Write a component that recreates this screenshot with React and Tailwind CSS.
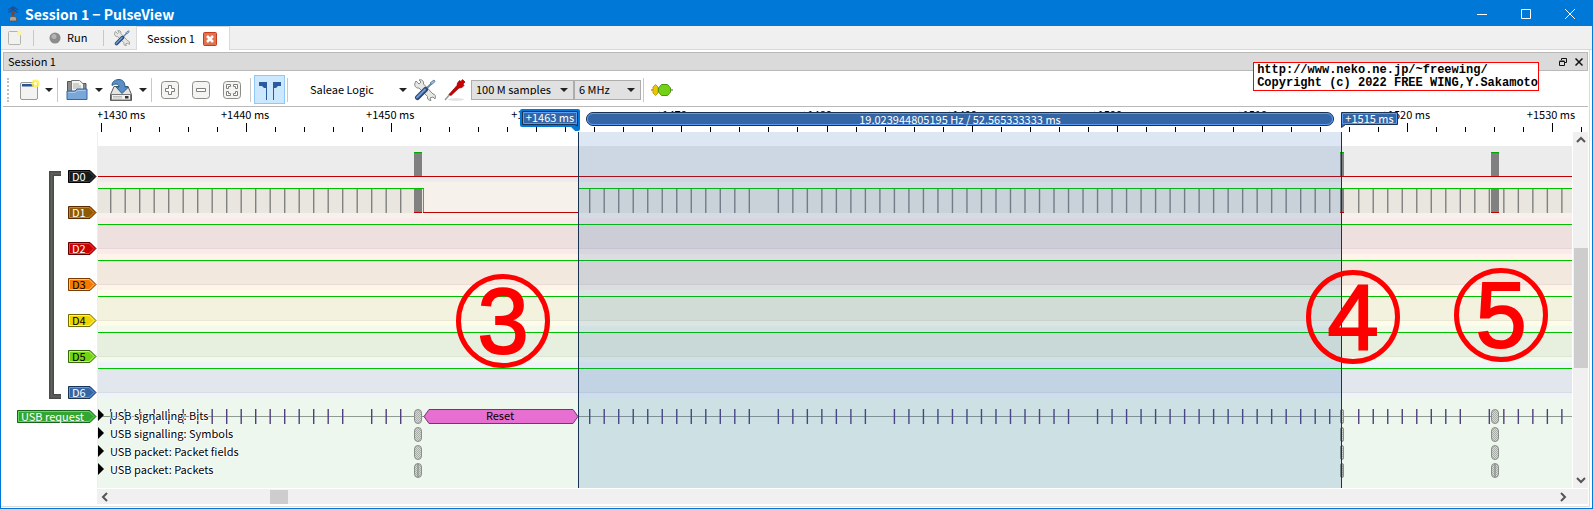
import { useState } from 'react';
import clsx from 'clsx';

// Pixel geometry of the trace view, measured from the left edge of the lanes
const LANE_HEIGHT = 36;
const CURSOR_A = 480;
const BURSTS = [
  { x: 316, w: 8 },
  { x: 1242, w: 4 },
  { x: 1393, w: 8 },
];

const CHANNELS = [
  { name: 'D0', fill: '#16191a', edge: '#000000', glow: '#3a4043', text: 'text-white', lane: 'bg-[#ececec]', level: 'low' },
  { name: 'D1', fill: '#8f5902', edge: '#5c2a00', glow: '#f57900', text: 'text-white', lane: 'bg-[#f6f1eb]', level: 'usb' },
  { name: 'D2', fill: '#cc0000', edge: '#5f0000', glow: '#ff4040', text: 'text-white', lane: 'bg-[#fbeaea]', level: 'high' },
  { name: 'D3', fill: '#f57900', edge: '#7a3c00', glow: '#ffc080', text: 'text-black', lane: 'bg-[#fff3ea]', level: 'high' },
  { name: 'D4', fill: '#edd400', edge: '#766a00', glow: '#fff27a', text: 'text-black', lane: 'bg-[#fffdea]', level: 'high' },
  { name: 'D5', fill: '#73d216', edge: '#39690b', glow: '#b5f57a', text: 'text-black', lane: 'bg-[#f4faeb]', level: 'high' },
  { name: 'D6', fill: '#3465a4', edge: '#1a3252', glow: '#5c9cf5', text: 'text-white', lane: 'bg-[#eef2f9]', level: 'high' },
];

const DECODER_ROWS = [
  'USB signalling: Bits',
  'USB signalling: Symbols',
  'USB packet: Packet fields',
  'USB packet: Packets',
];

const NOTES = [
  { digit: '3', place: 'left-[358px] top-[142px]' },
  { digit: '4', place: 'left-[1208px] top-[138px]' },
  { digit: '5', place: 'left-[1356px] top-[136px]' },
];

// Keep-alive pulses, one every millisecond
const before = Array.from({ length: 21 }, (_, k) => 12 + k * 14.5);
const after = Array.from({ length: 68 }, (_, k) => 491 + k * 14.51);
const d1Pulses = [...before, ...after.filter((_, k) => k !== 12 && k !== 52)];
const bitPulses = [
  ...before.filter((_, k) => k !== 17),
  ...after.filter((_, k) => ![12, 20, 34, 52, 61].includes(k)),
];

function DownArrow({ className }) {
  return (
    <svg className={clsx('h-1 w-2 shrink-0', className)} viewBox="0 0 8 4">
      <path d="M0 0h8L4 4z" fill="#222" />
    </svg>
  );
}

function Separator({ className }) {
  return <div className={clsx('w-px shrink-0 bg-[#c8c8c8]', className)} />;
}

function NewIcon({ className }) {
  return (
    <svg className={className} viewBox="0 0 22 22">
      <rect x="1.5" y="3.500" width="17" height="17" rx="1.500" fill="#f3f3f1" stroke="#9a9a96" />
      <path d="M3 5h12v2.500H3z" fill="#2c5494" />
      <circle cx="16.500" cy="4.500" r="4" fill="#fff04a" opacity=".85" />
      <circle cx="16.500" cy="4.500" r="1.500" fill="#fff" />
    </svg>
  );
}

function PageIcon({ className }) {
  return (
    <svg className={className} viewBox="0 0 16 16">
      <rect x="1.500" y="1.500" width="12" height="13" rx="1" fill="#f1f1ef" stroke="#b2b2ae" />
      <circle cx="12.500" cy="3" r="2.500" fill="#fbf3a8" />
    </svg>
  );
}

function OpenIcon() {
  return (
    <svg className="h-[22px] w-[22px]" viewBox="0 0 22 22">
      <path d="M1.500 19V2.500h6l1.500 2h11V19z" fill="#8a8d88" stroke="#555753" />
      <path d="M5.500 1.500h8l4 3.500v8h-12z" fill="#f4f4f2" stroke="#777" />
      <path d="M7 5h6M7 7h8M7 9h8" stroke="#aaa" />
      <path d="M1 20.500V12h8l2-2H21v10.500z" fill="#7ba6d8" stroke="#3465a4" />
      <path d="M2.500 13.500h7l2-2H19.500" fill="none" stroke="#a9c8ec" />
    </svg>
  );
}

function SaveIcon() {
  return (
    <svg className="h-6 w-6" viewBox="0 0 24 24">
      <path d="M5 8.500h14l3.500 8v6h-21v-6z" fill="#e4e5e2" stroke="#555753" />
      <rect x="2.500" y="16.500" width="19" height="5.500" fill="#f2f2f0" stroke="#777" />
      <path d="M4 18.500h9M4 20h9" stroke="#bbb" />
      <rect x="16" y="18" width="3.500" height="2.500" fill="#333" />
      <path d="M3 7.500C3 3 7 1.500 10 1.500c4 0 6 3 6 7.500h3.500L13 15.500 7 9h3c0-3-3-4-7-1.500z" fill="#5a8fc4" stroke="#2a5c8f" />
    </svg>
  );
}

function ZoomIcon({ kind }) {
  return (
    <svg className="h-5 w-5" viewBox="0 0 20 20">
      <rect x="1.500" y="1.500" width="17" height="17" rx="3" fill="#f4f4f2" stroke="#8c8c88" />
      {kind === 'in' && (
        <path d="M8.500 5.500h3v3h3v3h-3v3h-3v-3h-3v-3h3z" fill="#fff" stroke="#7e7e7a" />
      )}
      {kind === 'out' && <path d="M5.500 8.500h9v3h-9z" fill="#fff" stroke="#7e7e7a" />}
      {kind === 'fit' && (
        <path
          d="M4.500 8.500v-4h4v2h-2v2zM11.500 4.500h4v4h-2v-2h-2zM4.500 11.500h2v2h2v2h-4zM13.500 11.500h2v4h-4v-2h2z"
          fill="#fff"
          stroke="#7e7e7a"
        />
      )}
    </svg>
  );
}

function CursorsIcon() {
  return (
    <svg className="h-5 w-6" viewBox="0 0 24 20">
      <path d="M1 2h8v18H8V8H6L4 6H1zM23 2h-8v18h1V8h2l2-2h3z" fill="#2a5ba0" />
    </svg>
  );
}

function ToolsIcon({ className }) {
  return (
    <svg className={className} viewBox="0 0 22 22">
      <path d="M2 2l3 3 2-2-2-2c3-1 5 1 4.500 4L19 15c2 0 3 2 2 5l-2-2-3 1 1 2.500c-3 0-4-2-3.500-4L5 9C2 9.500 0 7 1 4z" fill="#e6e7e4" stroke="#888a85" />
      <path d="M20.500 1.500L12 10" stroke="#6f87a8" strokeWidth="2" />
      <path d="M20 1l1 1.500-3 3-2-1.500z" fill="#a6c0e0" stroke="#48668e" strokeWidth=".7" />
      <path d="M11.500 10.500l-8 8" stroke="#27477c" strokeWidth="5" strokeLinecap="round" />
      <path d="M11 10.500l-8 8" stroke="#7299d0" strokeWidth="2" strokeLinecap="round" />
    </svg>
  );
}

function ProbeIcon() {
  return (
    <svg className="h-[22px] w-[22px]" viewBox="0 0 22 22">
      <ellipse cx="12" cy="20.500" rx="8" ry="1.500" fill="#e4e4e4" />
      <path d="M1 21l5.500-6.500" stroke="#999" strokeWidth="1.500" />
      <path d="M5 15.500l8-9 .500-2.500 2-2.500 1.500 1L18.500.500l2.500 2.500-2 2 1 1.500-2 2-3 .500-8 7.500z" fill="#cc0000" stroke="#8a0000" strokeWidth=".7" />
    </svg>
  );
}

function DecoderIcon() {
  return (
    <svg className="h-3.5 w-6" viewBox="0 0 24 14">
      <path d="M1 7h22" stroke="#555753" />
      <path d="M5.500 1.500L8 4v6l-2.500 2.500L3 10V4z" fill="#edc400" stroke="#c4a000" />
      <path d="M11.500 1.500h6L20.500 5v4l-3 3.500h-6L8.500 9V5z" fill="#73d216" stroke="#4e9a06" />
    </svg>
  );
}

function AppIcon() {
  return (
    <svg className="h-4 w-4" viewBox="0 0 16 16">
      <path d="M3 4l3-2 2-1 2 1 3 2M3.500 6.500L8 3l4.500 3.500M6 1l2 3 2-3" fill="none" stroke="#1b4f8f" strokeWidth="1.200" />
      <path d="M6 5h4v3H9v4H7V8H6z" fill="#6b4a48" />
      <path d="M4.500 12l1.500-1.500h4l1.500 1.500v3h-7z" fill="#a9a49c" stroke="#5d4a42" strokeWidth=".7" />
    </svg>
  );
}

function TitleBar() {
  return (
    <header className="flex h-[25px] items-center bg-[#0078d7] pl-1 text-white">
      <AppIcon />
      <h1 className="ml-1 flex-1 text-[14px] font-bold">Session 1 − PulseView</h1>
      <button aria-label="Minimize" className="flex w-11 justify-center">
        <svg className="h-3 w-3" viewBox="0 0 12 12"><path d="M1 6.500h10" stroke="white" /></svg>
      </button>
      <button aria-label="Maximize" className="flex w-11 justify-center">
        <svg className="h-3 w-3" viewBox="0 0 12 12"><path d="M1.500 1.500h9v9h-9z" fill="none" stroke="white" /></svg>
      </button>
      <button aria-label="Close" className="flex w-11 justify-center">
        <svg className="h-3 w-3" viewBox="0 0 12 12"><path d="M1 1l10 10M11 1L1 11" stroke="white" /></svg>
      </button>
    </header>
  );
}

function TabBar() {
  return (
    <nav className="flex h-6 items-stretch bg-[#f0f0f0]">
      <div className="flex w-[135px] items-center border-b border-[#d9d9d9] pl-1.5">
        <button aria-label="New session"><PageIcon className="h-4 w-4" /></button>
        <Separator className="ml-2.5 h-4" />
        <button className="ml-[15px] flex items-center gap-1.5">
          <svg className="h-3 w-3" viewBox="0 0 12 12">
            <circle cx="6" cy="6" r="5.500" fill="#8c8c8c" />
            <circle cx="5" cy="4.500" r="2.500" fill="#b4b4b4" />
          </svg>
          Run
        </button>
        <Separator className="ml-4 h-4" />
        <button aria-label="Settings" className="ml-2.5"><ToolsIcon className="h-4 w-4" /></button>
      </div>
      <div className="flex w-[94px] items-center justify-between border-x border-t border-[#d9d9d9] bg-white pr-3 pl-2.5">
        <span>Session 1</span>
        <button aria-label="Close session">
          <svg className="h-3.5 w-3.5" viewBox="0 0 14 14">
            <rect x=".5" y=".5" width="13" height="13" rx="1" fill="#e0724e" stroke="#c8391e" />
            <path d="M4 4l6 6M10 4l-6 6" stroke="white" strokeWidth="2.500" />
          </svg>
        </button>
      </div>
      <div className="flex-1 border-b border-[#d9d9d9]" />
    </nav>
  );
}

function Combo({ label, value, options, onChange, className }) {
  return (
    <div className={clsx('relative', className)}>
      <select
        aria-label={label}
        value={value}
        onChange={(e) => onChange(e.target.value)}
        className="block h-5 w-full appearance-none border border-[#adadad] bg-[#e1e1e1] pl-1 leading-none"
      >
        {options.map((o) => (
          <option key={o}>{o}</option>
        ))}
      </select>
      <DownArrow className="pointer-events-none absolute top-2 right-1.5" />
    </div>
  );
}

function Toolbar() {
  const [samples, setSamples] = useState('100 M samples');
  const [rate, setRate] = useState('6 MHz');
  return (
    <div className="flex h-9 items-center border-b border-[#b9b9b9] bg-white pt-0.5 pl-1">
      <div className="h-6 border-l-2 border-dotted border-[#c0c0c0]" />
      <button aria-label="New view" className="ml-2.5 flex items-center">
        <NewIcon className="h-[22px] w-[22px]" />
        <DownArrow className="ml-1" />
      </button>
      <Separator className="ml-1 h-6" />
      <button aria-label="Open" className="ml-2 flex items-center">
        <OpenIcon />
        <DownArrow className="ml-[7px]" />
      </button>
      <button aria-label="Save" className="ml-1.5 flex items-center">
        <SaveIcon />
        <DownArrow className="ml-1.5" />
      </button>
      <Separator className="ml-1 h-6" />
      <div className="ml-2 flex gap-[11px]">
        <button aria-label="Zoom in"><ZoomIcon kind="in" /></button>
        <button aria-label="Zoom out"><ZoomIcon kind="out" /></button>
        <button aria-label="Zoom to fit"><ZoomIcon kind="fit" /></button>
      </div>
      <Separator className="ml-2 h-6" />
      <button
        aria-label="Show cursors"
        className="ml-[3px] flex h-[29px] w-[31px] items-center justify-center border border-[#90c8f6] bg-[#cce8ff]"
      >
        <CursorsIcon />
      </button>
      <Separator className="ml-0.5 h-6" />
      <button className="ml-[22px] flex w-[97px] items-center justify-between">
        Saleae Logic
        <DownArrow />
      </button>
      <button aria-label="Configure device" className="ml-[7px]"><ToolsIcon className="h-[22px] w-[22px]" /></button>
      <button aria-label="Configure channels" className="ml-2"><ProbeIcon /></button>
      <Combo
        label="Sample count"
        value={samples}
        onChange={setSamples}
        options={['10 M samples', '100 M samples']}
        className="ml-[5px] w-[103px]"
      />
      <Combo
        label="Sample rate"
        value={rate}
        onChange={setRate}
        options={['6 MHz', '12 MHz']}
        className="w-[67px]"
      />
      <Separator className="ml-0.5 h-6" />
      <button aria-label="Add decoder" className="ml-1.5"><DecoderIcon /></button>
    </div>
  );
}

function Ruler() {
  const ticks = Array.from({ length: 52 }, (_, k) => k);
  return (
    <div className="relative ml-[95px] h-[25px] bg-white">
      <svg className="h-full w-full" shapeRendering="crispEdges">
        {ticks.map((k) => (
          <rect key={k} x={Math.round(3 + k * 29.02)} y={k % 5 ? 20 : 16} width="1" height={k % 5 ? 5 : 9} />
        ))}
        {ticks.filter((k) => k % 5 === 0).map((k) => (
          <text key={k} x={k ? 2 + k * 29.02 : 23} y="12" textAnchor="middle" fontSize="11">
            +{1430 + k * 2} ms
          </text>
        ))}
      </svg>
      {/* Cursor flags and the interval between them */}
      <div className="absolute top-0.5 left-[422px] flex h-[22px] w-[60px] justify-center text-white">
        <svg className="absolute inset-0 h-full w-full" viewBox="0 0 60 22">
          <path d="M2 2h56v18h-2l-4-4H2z" fill="#3465a4" stroke="#0078d7" strokeWidth="4" strokeLinejoin="round" />
          <path d="M2.500 2.500h55V17l-3-1.500h-52z" fill="#3465a4" stroke="#1a3252" />
          <path d="M3.500 3.500h53v11h-53z" fill="none" stroke="#5c9cf5" />
        </svg>
        <span className="relative leading-[17px]">+1463 ms</span>
      </div>
      <div className="absolute top-[5px] left-[488px] h-[14px] w-[748px] rounded-full border border-[#1a3252] bg-[#3465a4]">
        <div className="h-full rounded-full border border-[#5c9cf5] text-center leading-[10px] text-white">
          19.023944805195 Hz / 52.565333333 ms
        </div>
      </div>
      <div className="absolute top-[5px] left-[1243px] flex h-4 w-[57px] justify-center text-white">
        <svg className="absolute inset-0 h-full w-full" viewBox="0 0 57 16">
          <path d="M.5.500h56v12H4.500l-4 3z" fill="#3465a4" stroke="#1a3252" />
          <path d="M1.500 12V1.500h54v10h-52z" fill="none" stroke="#5c9cf5" />
        </svg>
        <span className="relative leading-[13px]">+1515 ms</span>
      </div>
    </div>
  );
}

function Tag({ children, fill, edge, glow, className, width }) {
  const tip = width - 1;
  return (
    <div className={clsx('relative h-[13px] pl-1 leading-[12px]', className)}>
      <svg className="absolute inset-0 h-full w-full" viewBox={`0 0 ${width} 13`}>
        <path d={`M.5.5H${tip - 6}L${tip} 6.5L${tip - 6} 12.5H.5z`} fill={fill} stroke={edge} />
        <path d={`M1.500 1.500H${tip - 7}L${tip - 2} 6.500L${tip - 7} 11.500H1.500z`} fill="none" stroke={glow} />
      </svg>
      <span className="relative">{children}</span>
    </div>
  );
}

function ChannelList() {
  return (
    <aside className="relative w-[95px] shrink-0 border-r border-[#eeeeee] bg-white pt-[14px]">
      <svg className="absolute top-[39px] left-[46px] h-[228px] w-3" viewBox="0 0 12 228">
        <path d="M12 2.500H2.500v223H12" fill="none" stroke="#4a4c49" strokeWidth="5" />
        <path d="M12 2.500H2.500v223H12" fill="none" stroke="#5f615e" strokeWidth="2" />
      </svg>
      {CHANNELS.map(({ name, fill, edge, glow, text }) => (
        <div key={name} className="flex h-9 justify-end pt-6">
          <Tag fill={fill} edge={edge} glow={glow} width={29} className={clsx('w-[29px]', text)}>
            {name}
          </Tag>
        </div>
      ))}
      <div className="flex justify-end pt-3">
        <Tag fill="#33a532" edge="#17641a" glow="#5be05a" width={80} className="w-20 text-white">
          USB request
        </Tag>
      </div>
    </aside>
  );
}

function Lane({ level, lane }) {
  return (
    <div className={clsx('h-9', lane)}>
      <svg className="block h-full w-full" height={LANE_HEIGHT} shapeRendering="crispEdges">
        {level === 'high' && (
          <>
            <rect y="6" width="100%" height="25" fill="#002000" opacity=".05" />
            <rect y="30" width="100%" height="1" fill="#000" opacity=".04" />
            <rect y="6" width="100%" height="1" fill="#00c000" />
          </>
        )}
        {level === 'low' && (
          <>
            {BURSTS.map(({ x, w }) => (
              <g key={x}>
                <rect x={x} y="6" width={w} height="24" fill="#808080" />
                <rect x={x} y="6" width={w} height="1" fill="#00a800" />
              </g>
            ))}
            <rect y="30" width="100%" height="1" fill="#c00000" />
          </>
        )}
        {level === 'usb' && (
          <>
            <rect y="6" width="325" height="25" fill="#002000" opacity=".05" />
            <rect x={CURSOR_A} y="6" width="100%" height="25" fill="#002000" opacity=".05" />
            <g shapeRendering="auto" fill="#808080">
              {d1Pulses.map((x) => (
                <rect key={x} x={x} y="6" width="1.400" height="25" />
              ))}
            </g>
            {BURSTS.map(({ x, w }) => (
              <g key={x}>
                <rect x={x} y="6" width={w} height="24" fill="#808080" />
                <rect x={x} y="30" width={w} height="1" fill="#c00000" />
              </g>
            ))}
            <rect x="325" y="6" width="1" height="24" fill="#808080" />
            <rect y="6" width="326" height="1" fill="#00c000" />
            <rect x={CURSOR_A} y="6" width="100%" height="1" fill="#00c000" />
            <rect x="325" y="30" width={CURSOR_A - 325} height="1" fill="#c00000" />
          </>
        )}
      </svg>
    </div>
  );
}

function DecoderTrace() {
  return (
    <div className="relative h-[90px] bg-[#edf7ed] pt-2 pb-2.5">
      <svg className="absolute inset-0 h-full w-full">
        <defs>
          <pattern id="dither" width="2" height="2" patternUnits="userSpaceOnUse">
            <rect width="2" height="2" fill="#d6dad6" />
            <path d="M0 0h1v1H0zM1 1h1v1H1z" fill="#a9ada9" shapeRendering="crispEdges" />
          </pattern>
        </defs>
        <rect y="18" width="100%" height="1" fill="#8f9a91" />
        {bitPulses.map((x) => (
          <rect key={x} x={x} y="11" width="1.400" height="15" fill="#4f4080" />
        ))}
        <path d="M326 18.500l5-7h144l5 7-5 7h-144z" fill="#e76fd1" stroke="#73386a" />
        <text x="402" y="22" textAnchor="middle" fontSize="11">Reset</text>
        {BURSTS.map(({ x, w }) =>
          [0, 1, 2, 3].map((row) => (
            <g key={`${x}-${row}`}>
              <rect x={x + 0.5} y={11.5 + row * 18} width={w - 1} height="14" rx={w / 2 - 0.5} fill="url(#dither)" stroke="#8a8e8a" />
              {row === 3 && <rect x={x + w / 2 - 0.5} y={12 + row * 18} width="1" height="13" fill="#7c807c" />}
            </g>
          ))
        )}
      </svg>
      {DECODER_ROWS.map((row) => (
        <div key={row} className="relative flex h-[18px] items-center">
          <svg className="h-3 w-1.5" viewBox="0 0 6 12"><path d="M0 0l6 6-6 6z" /></svg>
          <span className="ml-1.5 [text-shadow:1px_0_white,-1px_0_white,0_1px_white,0_-1px_white]">{row}</span>
        </div>
      ))}
    </div>
  );
}

function Chevron({ d }) {
  return (
    <svg className="h-2.5 w-2.5" viewBox="0 0 10 10">
      <path d={d} fill="none" stroke="#555" strokeWidth="2" />
    </svg>
  );
}

function TraceView() {
  return (
    <div className="flex">
      <ChannelList />
      <div className="relative min-w-0 flex-1 overflow-hidden border-r border-white pt-[14px]">
        {CHANNELS.map((c) => (
          <Lane key={c.name} level={c.level} lane={c.lane} />
        ))}
        <DecoderTrace />
        <div className="absolute inset-y-0 left-[480px] w-[764px] border-x border-[#1a3252] bg-[#286cb4]/16" />
        {NOTES.map(({ digit, place }) => (
          <div
            key={digit}
            className={clsx(
              'absolute flex h-[94px] w-[94px] items-center justify-center rounded-full border-5 border-[#ff0000]',
              "font-['Liberation_Sans',sans-serif] text-[92px] leading-none text-[#ff0000] [-webkit-text-stroke:2px_#ff0000]",
              place
            )}
          >
            {digit}
          </div>
        ))}
      </div>
      <div className="flex w-[15px] shrink-0 flex-col items-center bg-[#f0f0f0] py-[3px]">
        <Chevron d="M1 7l4-4 4 4" />
        <div className="mt-[103px] h-[120px] w-[14px] bg-[#cdcdcd]" />
        <div className="flex-1" />
        <Chevron d="M1 3l4 4 4-4" />
      </div>
    </div>
  );
}

export default function App() {
  return (
    <div className="relative border border-[#0078d7] bg-white font-['Noto_Sans_CJK_JP',sans-serif] text-[11px] leading-none text-black">
      <TitleBar />
      <TabBar />
      <main className="mr-0.5 mb-px border-r border-b border-[#dcdcdc] pt-0.5 pr-px pb-0.5 pl-0.5">
        <div className="flex h-[19px] items-center border border-[#b9b9b9] bg-[#dadada] px-1">
          <h2 className="flex-1">Session 1</h2>
          <button aria-label="Float" className="mr-2">
            <svg className="h-2 w-2" viewBox="0 0 8 8">
              <path d="M2.500 2V.5h5v4H6M.5 3.500h5v4h-5zM.5 3h5" fill="none" stroke="#111" />
            </svg>
          </button>
          <button aria-label="Close dock">
            <svg className="h-2 w-2" viewBox="0 0 8 8"><path d="M.5.5l7 7M7.500.500l-7 7" stroke="#111" strokeWidth="1.500" /></svg>
          </button>
        </div>
        <Toolbar />
        <Ruler />
        <TraceView />
        <div className="mt-px ml-[94px] flex h-[15px] items-center bg-[#f0f0f0] pr-5 pl-[3px]">
          <Chevron d="M7 1L3 5l4 4" />
          <div className="ml-40 h-[14px] w-[18px] bg-[#cdcdcd]" />
          <div className="flex-1" />
          <Chevron d="M3 1l4 4-4 4" />
        </div>
      </main>
      <p className="absolute top-[61px] right-[53px] border border-[#ff0000] bg-white pt-px pl-[3px] font-['Liberation_Mono',monospace] text-[12px] leading-[13px] font-bold whitespace-nowrap">
        http://www.neko.ne.jp/~freewing/
        <br />
        Copyright (c) 2022 FREE WING,Y.Sakamoto
      </p>
    </div>
  );
}
